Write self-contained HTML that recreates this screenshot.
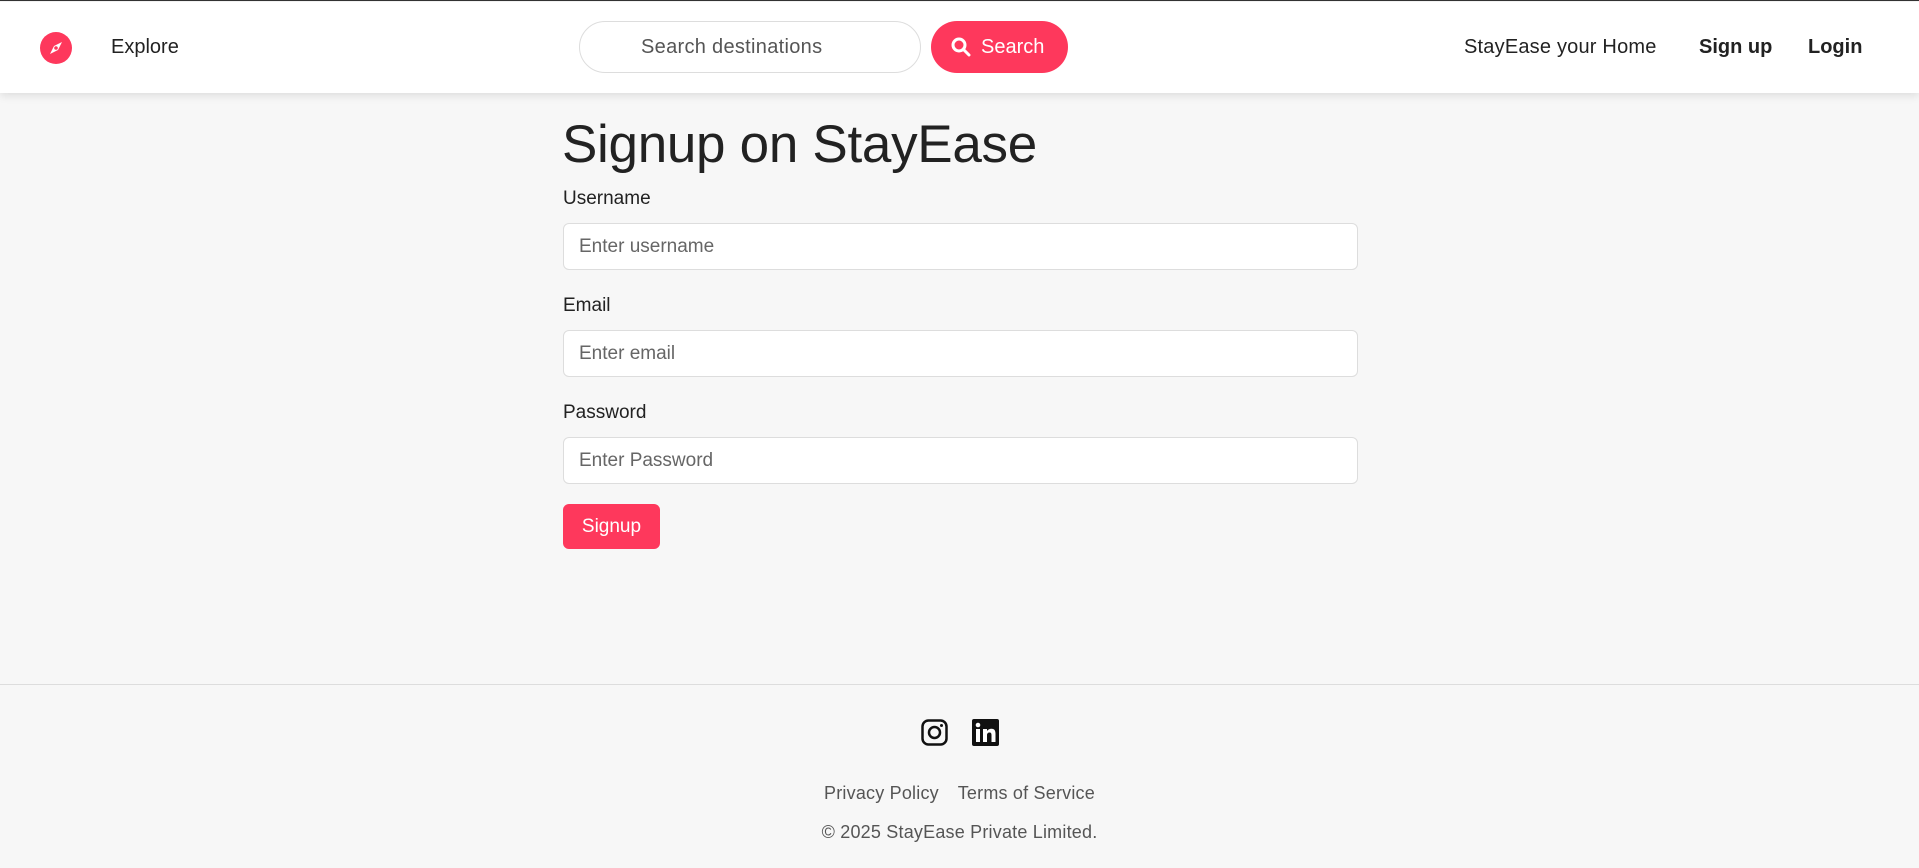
<!DOCTYPE html>
<html><head><meta charset="utf-8"><style>
*{box-sizing:border-box;margin:0;padding:0}
body{width:1919px;height:868px;background:#f7f7f7;font-family:"Liberation Sans",sans-serif;color:#222;position:relative;overflow:hidden;border-top:1px solid #333}
.nav{position:absolute;top:1px;left:0;width:1919px;height:91px;background:#fff;box-shadow:0 3px 8px rgba(0,0,0,.1)}
.abs{position:absolute}
.logo{left:40px;top:30px;width:32px;height:32px;border-radius:50%;background:#fe385c}
.explore{left:111px;top:34px;font-size:20px;color:#222}
.search{left:579px;top:19px;width:342px;height:52px;border:1px solid #ddd;border-radius:26px;background:#fff;font-size:20px;color:#555;line-height:50px;padding-left:61px;letter-spacing:0.3px}
.sbtn{left:931px;top:19px;width:137px;height:52px;border-radius:26px;background:#fe385c;color:#fff;font-size:20px;line-height:52px;padding-left:50px}
.r{top:34px;font-size:20px;color:#222}
h1{position:absolute;left:562px;top:113px;font-size:53px;font-weight:400;color:#222;letter-spacing:-0.3px}
.lbl{position:absolute;left:563px;font-size:19px;color:#222}
.inp{position:absolute;left:563px;width:795px;height:47px;border:1px solid #ddd;border-radius:6px;background:#fff;font-size:19px;color:#666;padding-left:15px;line-height:45px}
.btn{position:absolute;left:563px;top:503px;width:97px;height:45px;background:#fe385c;border-radius:6px;color:#fff;font-size:19px;text-align:center;line-height:45px}
.foot{position:absolute;left:0;top:683px;width:1919px;border-top:1px solid #ddd}
.fl{position:absolute;width:1919px;text-align:center;font-size:18px;color:#555;letter-spacing:0.2px}
</style></head><body>
<div class="nav">
<div class="abs logo"><svg width="32" height="32" viewBox="0 0 32 32"><path d="M22 10 L18 18 L10 22 L14 14 Z" fill="#fff"/><circle cx="16" cy="16" r="1.8" fill="#fe385c"/></svg></div>
<div class="abs explore">Explore</div>
<div class="abs search">Search destinations</div>
<div class="abs sbtn"><svg class="abs" style="left:20px;top:16px" width="20" height="20" viewBox="0 0 20 20"><circle cx="8" cy="8" r="6" stroke="#fff" stroke-width="3" fill="none"/><path d="M12.5 12.5 L18 18" stroke="#fff" stroke-width="3" stroke-linecap="round"/></svg>Search</div>
<div class="abs r" style="left:1464px;letter-spacing:0.2px">StayEase your Home</div>
<div class="abs r" style="left:1699px;font-weight:bold">Sign up</div>
<div class="abs r" style="left:1808px;font-weight:bold">Login</div>
</div>
<h1>Signup on StayEase</h1>
<div class="lbl" style="top:187px">Username</div>
<div class="inp" style="top:222px">Enter username</div>
<div class="lbl" style="top:294px">Email</div>
<div class="inp" style="top:329px">Enter email</div>
<div class="lbl" style="top:401px">Password</div>
<div class="inp" style="top:436px">Enter Password</div>
<div class="btn">Signup</div>
<div class="foot"></div>
<svg class="abs" style="left:921px;top:718px" width="27" height="27" viewBox="0 0 27 27"><rect x="1.5" y="1.5" width="24" height="24" rx="6" stroke="#111" stroke-width="2.5" fill="none"/><circle cx="13.5" cy="13.5" r="5.5" stroke="#111" stroke-width="2.5" fill="none"/><circle cx="20.5" cy="6.5" r="1.5" fill="#111"/></svg>
<svg class="abs" style="left:972px;top:718px" width="27" height="27" viewBox="0 0 27 27"><rect width="27" height="27" rx="2" fill="#111"/><rect x="4" y="10" width="4" height="13" fill="#fff"/><circle cx="6" cy="6" r="2.3" fill="#fff"/><path d="M11 10h4v2c1-1.5 2.5-2.3 4.5-2.3 3 0 4 2 4 5V23h-4v-7c0-1.5-.5-2.5-2-2.5s-2.5 1-2.5 2.7V23h-4z" fill="#fff"/></svg>
<div class="fl" style="top:782px"><span style="margin-right:14px">Privacy Policy</span> Terms of Service</div>
<div class="fl" style="top:821px">© 2025 StayEase Private Limited.</div>
</body></html>
